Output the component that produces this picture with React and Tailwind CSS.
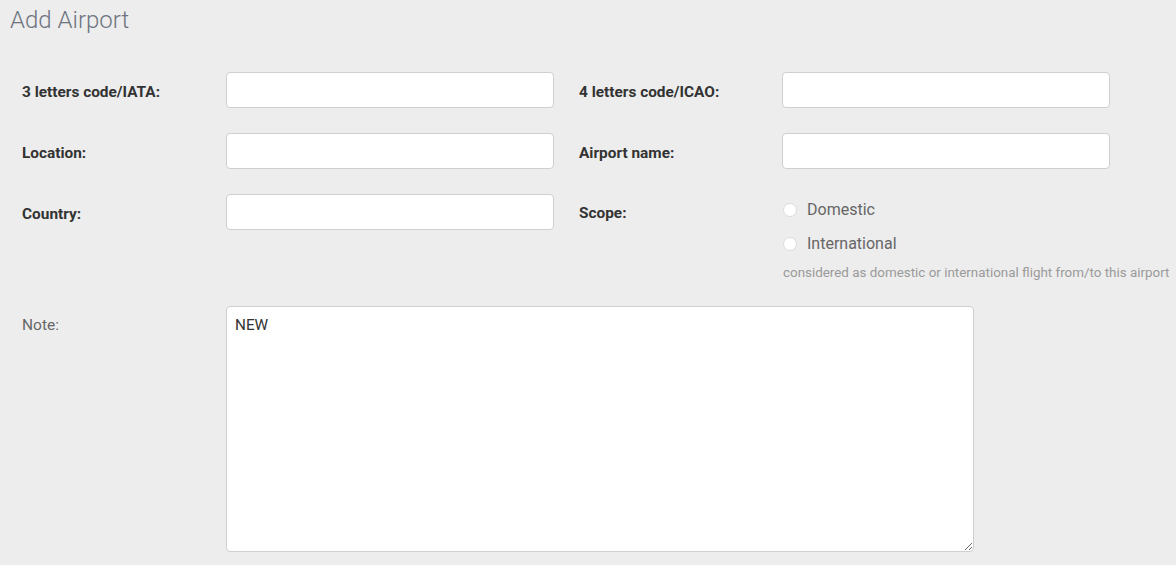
import { useState } from "react";

function Field({ label, labelWidth = "w-[204px]", value = "", onChange }) {
  return (
    <div className="flex items-center">
      <label className={`${labelWidth} shrink-0 mt-[3px] text-[15.4px] leading-[20px] font-bold text-[#333]`}>{label}</label>
      <input
        type="text"
        value={value}
        onChange={e => onChange && onChange(e.target.value)}
        className="w-[328px] h-[36px] px-3 bg-white border border-[#cfcfcf] rounded-[4px] text-[14px] outline-none"
      />
    </div>
  );
}

function Radio({ label, checked, onClick }) {
  return (
    <button type="button" onClick={onClick} className="flex items-center h-[34px] text-left">
      <span className="w-[14px] h-[14px] rounded-full bg-white border border-[#dcdcdc] flex items-center justify-center">
        {checked && <span className="w-[6px] h-[6px] rounded-full bg-[#555]" />}
      </span>
      <span className="ml-[10px] text-[16px] text-[#666]">{label}</span>
    </button>
  );
}

export default function App() {
  const [form, setForm] = useState({ iata: "", icao: "", location: "", name: "", country: "" });
  const [scope, setScope] = useState("");
  const [note, setNote] = useState("NEW");
  const set = k => v => setForm(f => ({ ...f, [k]: v }));

  return (
    <div className="min-h-screen bg-[#ededed] font-['Roboto',sans-serif]">
      <h1 className="pl-[10px] pt-[6px] text-[24px] leading-[28px] font-light text-[#6d7480]">Add Airport</h1>

      <div className="pl-[22px] pt-[38px] flex flex-col gap-[25px]">
        <div className="flex gap-[25px]">
          <Field label="3 letters code/IATA:" value={form.iata} onChange={set("iata")} />
          <Field label="4 letters code/ICAO:" labelWidth="w-[203px]" value={form.icao} onChange={set("icao")} />
        </div>
        <div className="flex gap-[25px]">
          <Field label="Location:" value={form.location} onChange={set("location")} />
          <Field label="Airport name:" labelWidth="w-[203px]" value={form.name} onChange={set("name")} />
        </div>
        <div className="flex gap-[25px] items-start">
          <Field label="Country:" value={form.country} onChange={set("country")} />
          <div className="flex items-start">
            <label className="w-[203px] shrink-0 h-[36px] pt-[3px] flex items-center text-[15.4px] font-bold text-[#333]">Scope:</label>
            <div className="flex flex-col -mt-[1px] ml-[1px]">
              <Radio label="Domestic" checked={scope === "d"} onClick={() => setScope("d")} />
              <Radio label="International" checked={scope === "i"} onClick={() => setScope("i")} />
              <p className="mt-[3px] text-[13.4px] leading-[18px] text-[#9a9a9a]">
                considered as domestic or international flight from/to this airport
              </p>
            </div>
          </div>
        </div>

        <div className="flex items-start -mt-[1px]">
          <label className="w-[204px] shrink-0 pt-[8px] text-[15.5px] leading-[22px] text-[#666]">Note:</label>
          <textarea
            value={note}
            onChange={e => setNote(e.target.value)}
            className="w-[748px] h-[246px] px-[8px] py-[7px] bg-white border border-[#cfcfcf] rounded-[4px] text-[15.3px] leading-[22px] text-[#333] outline-none"
          />
        </div>
      </div>
    </div>
  );
}
